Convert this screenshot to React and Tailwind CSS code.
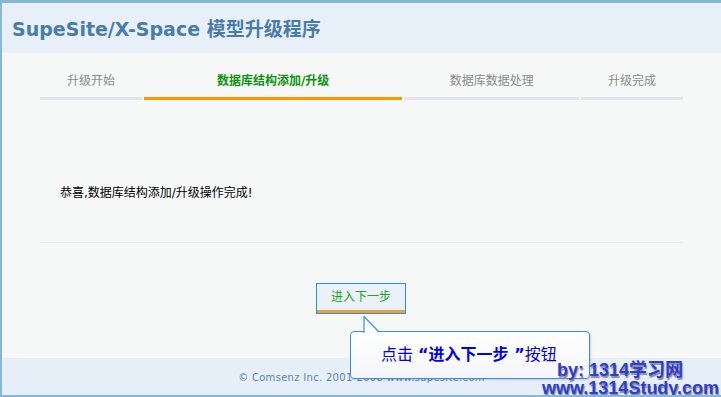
import React from "react";

const cjk = "font-['DejaVu_Sans','Noto_Sans_CJK_SC',sans-serif]";

const steps = [
  { label: "升级开始", width: "w-[102px]", active: false },
  { label: "数据库结构添加/升级", width: "w-[259px]", active: true },
  { label: "数据库数据处理", width: "w-[175px]", active: false },
  { label: "升级完成", width: "w-[102px]", active: false },
];

const App = () => {
  return (
    <div className="relative w-[721px] h-[397px] overflow-hidden bg-[#f6f8f8] border-l-2 border-t-[3px] border-b-2 border-[#86b8d3] flex flex-col">
      {/* header */}
      <div className="h-[50px] shrink-0 bg-[#e7eff9] border-b border-[#eef4fa] flex items-center pl-[10px] pt-[4px]">
        <h1 className={`${cjk} text-[19px] font-bold text-[#4a7ca6] leading-none`}>
          SupeSite/X-Space 模型升级程序
        </h1>
      </div>

      {/* main */}
      <div className="flex-1 flex flex-col px-[38px]">
        <div className="flex gap-[2px] mt-[18px]">
          {steps.map((s) => (
            <div key={s.label} className={`${s.width} flex flex-col`}>
              <div
                className={`h-[20px] leading-[20px] text-center text-[12px] ${cjk} ${
                  s.active ? "text-[#109010] font-bold" : "text-[#8a8a8a]"
                }`}
              >
                {s.label}
              </div>
              <div className={`mt-[6px] h-[3px] ${s.active ? "bg-[#f99a00]" : "bg-[#e3e5ea]"}`} />
            </div>
          ))}
        </div>

        <p className={`mt-[83px] pl-[20px] h-[20px] leading-[20px] text-[12px] text-black ${cjk}`}>
          恭喜,数据库结构添加/升级操作完成!
        </p>

        <div className="mt-[39px] h-px bg-[#e6eaef]" />

        <div className="flex justify-center mt-[40px] pr-[1px]">
          <button className={`w-[90px] h-[31px] border border-[#2c8cec] bg-[#eaf1f8] flex flex-col ${cjk}`}>
            <span className="flex-1 flex items-center justify-center text-[12px] text-[#23a023]">进入下一步</span>
            <span className="h-[3px] bg-[#f0a028]" />
          </button>
        </div>
      </div>

      {/* footer */}
      <div className="h-[37px] shrink-0 bg-[#e6eef8] flex items-center justify-center pt-[2px]">
        <span className="font-['DejaVu_Sans',sans-serif] text-[10px] text-[#5c86a8] tracking-[0.3px]">
          © Comsenz Inc. 2001-2008 www.supesite.com
        </span>
      </div>

      {/* callout */}
      <div className="absolute left-[348px] top-[328px] w-[240px] h-[48px] rounded-[4px] border border-[#3a8ee6] bg-gradient-to-b from-white to-[#f3f5f8] shadow-[1px_1px_2px_rgba(0,0,0,0.15)] flex items-center pl-[30px]">
        <svg className="absolute left-[12px] -top-[16px]" width="20" height="17" viewBox="0 0 20 17">
          <polygon points="1,0 1,17 16,17" fill="#ffffff" />
          <polyline points="1,17 1,0.5 16,16" fill="none" stroke="#3a8ee6" strokeWidth="1.2" />
        </svg>
        <span className={`${cjk} text-[16px] text-[#0000ee] whitespace-nowrap`}>
          点击 <span className="font-bold">“进入下一步 ”</span>按钮
        </span>
      </div>

      {/* watermark */}
      <div className="absolute left-[555px] top-[358px] font-['Liberation_Sans','Noto_Sans_CJK_SC',sans-serif] font-bold text-[18px] leading-[18px] text-[#2d3ed2] [text-shadow:1px_2px_1px_#8a8a9a]">
        by: 1314学习网
      </div>
      <div className="absolute left-[540px] top-[376px] font-['Liberation_Sans',sans-serif] font-bold text-[18px] leading-[18px] text-[#2d3ed2] [text-shadow:1px_2px_1px_#8a8a9a]">
        www.1314Study.com
      </div>
    </div>
  );
};

export default App;
